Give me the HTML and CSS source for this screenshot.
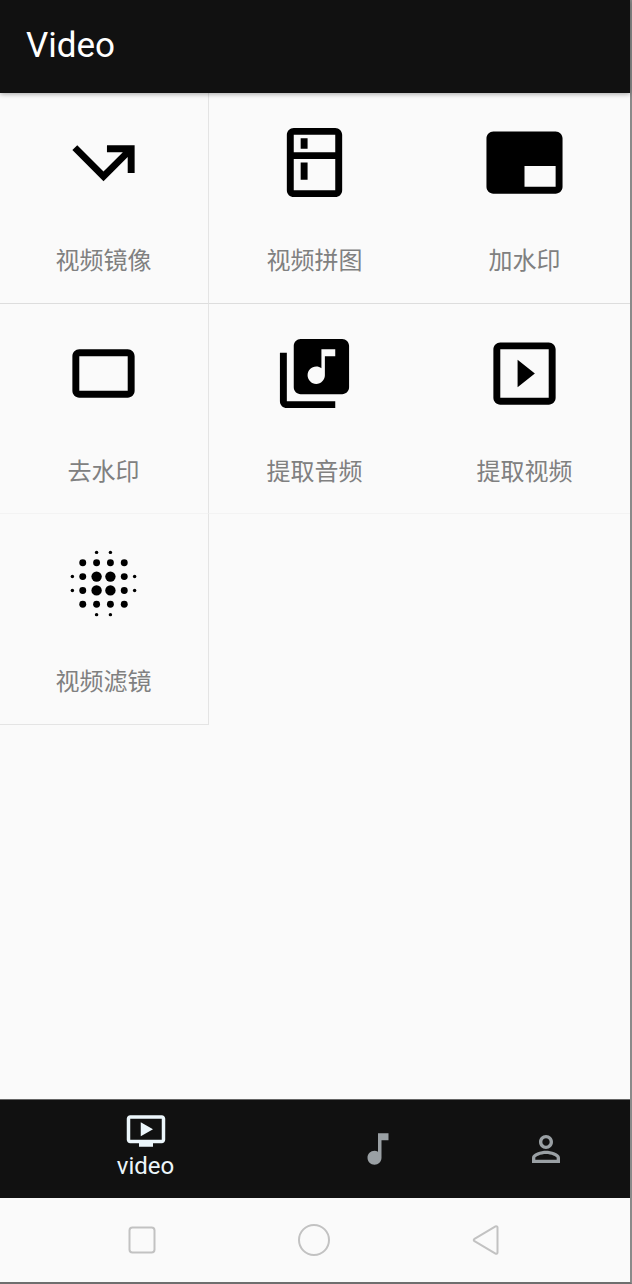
FILE: index.html
```html
<!DOCTYPE html>
<html lang="en">
<head>
    <meta charset="UTF-8">
    <meta name="viewport" content="width=device-width, initial-scale=1.0">
    <title>Video</title>
    <link rel="stylesheet" href="styles.css">
</head>
<body>
    <div class="screen">
        <header class="app-bar">Video</header>

        <main class="tools">
            <div class="tool">
                <svg class="tool-icon" viewBox="0 0 24 24"><path d="M3 8.41l9 9 7-7V15h2V7h-8v2h4.59L12 14.59 4.41 7 3 8.41z"/></svg>
                <span class="tool-label">视频镜像</span>
            </div>
            <div class="tool">
                <svg class="tool-icon" viewBox="0 0 24 24"><path d="M18 2.01L6 2c-1.1 0-2 .89-2 2v16c0 1.1.9 2 2 2h12c1.1 0 2-.9 2-2V4c0-1.11-.9-1.99-2-1.99zM18 20H6v-9.02h12V20zm0-11H6V4h12v5zM8 5h2v3H8zm0 7h2v5H8z"/></svg>
                <span class="tool-label">视频拼图</span>
            </div>
            <div class="tool">
                <svg class="tool-icon" viewBox="0 0 24 24"><path d="M21 3H3c-1.1 0-2 .9-2 2v14c0 1.1.9 2 2 2h18c1.1 0 2-.9 2-2V5c0-1.100-.9-2-2-2zm0 16h-9v-6h9v6z"/></svg>
                <span class="tool-label">加水印</span>
            </div>
            <div class="tool">
                <svg class="tool-icon" viewBox="0 0 24 24"><path d="M19 5H5c-1.1 0-2 .9-2 2v10c0 1.1.9 2 2 2h14c1.1 0 2-.9 2-2V7c0-1.100-.9-2-2-2zm0 12H5V7h14v10z"/></svg>
                <span class="tool-label">去水印</span>
            </div>
            <div class="tool">
                <svg class="tool-icon" viewBox="0 0 24 24"><path d="M20 2H8c-1.1 0-2 .9-2 2v12c0 1.1.9 2 2 2h12c1.1 0 2-.9 2-2V4c0-1.1-.9-2-2-2zm-2 5h-3v5.500c0 1.38-1.12 2.5-2.5 2.5S10 13.88 10 12.500s1.12-2.5 2.5-2.5c.57 0 1.08.19 1.5.51V5h4v2zM4 6H2v14c0 1.1.9 2 2 2h14v-2H4V6z"/></svg>
                <span class="tool-label">提取音频</span>
            </div>
            <div class="tool">
                <svg class="tool-icon" viewBox="0 0 24 24"><path d="M10 8v8l5-4-5-4zm9-5H5c-1.1 0-2 .9-2 2v14c0 1.1.9 2 2 2h14c1.1 0 2-.9 2-2V5c0-1.1-.9-2-2-2zm0 16H5V5h14v14z"/></svg>
                <span class="tool-label">提取视频</span>
            </div>
            <div class="tool">
                <svg class="tool-icon" viewBox="0 0 24 24">
                    <circle cx="10" cy="10" r="1.5"/><circle cx="14" cy="10" r="1.5"/><circle cx="10" cy="14" r="1.5"/><circle cx="14" cy="14" r="1.5"/>
                    <circle cx="6" cy="6" r="1"/><circle cx="10" cy="6" r="1"/><circle cx="14" cy="6" r="1"/><circle cx="18" cy="6" r="1"/>
                    <circle cx="6" cy="10" r="1"/><circle cx="18" cy="10" r="1"/><circle cx="6" cy="14" r="1"/><circle cx="18" cy="14" r="1"/>
                    <circle cx="6" cy="18" r="1"/><circle cx="10" cy="18" r="1"/><circle cx="14" cy="18" r="1"/><circle cx="18" cy="18" r="1"/>
                    <circle cx="10" cy="3" r=".5"/><circle cx="14" cy="3" r=".5"/><circle cx="10" cy="21" r=".5"/><circle cx="14" cy="21" r=".5"/>
                    <circle cx="3" cy="10" r=".5"/><circle cx="3" cy="14" r=".5"/><circle cx="21" cy="10" r=".5"/><circle cx="21" cy="14" r=".5"/>
                </svg>
                <span class="tool-label">视频滤镜</span>
            </div>
        </main>

        <nav class="tabs">
            <div class="tab active">
                <svg class="tab-icon" viewBox="0 0 24 24"><path d="M21 3H3c-1.11 0-2 .89-2 2v12c0 1.1.89 2 2 2h5v2h8v-2h5c1.1 0 1.99-.9 1.99-2L23 5c0-1.110-.9-2-2-2zm0 14H3V5h18v12zm-5-6l-7 4V7z"/></svg>
                <span class="tab-label">video</span>
            </div>
            <div class="tab">
                <svg class="tab-icon" viewBox="0 0 24 24"><path d="M12 3v10.55c-.59-.34-1.27-.55-2-.55-2.21 0-4 1.79-4 4s1.79 4 4 4 4-1.79 4-4V7h4V3h-6z"/></svg>
            </div>
            <div class="tab">
                <svg class="tab-icon" viewBox="0 0 24 24"><path d="M12 5.900c1.16 0 2.1.94 2.1 2.1s-.94 2.1-2.1 2.1S9.900 9.160 9.900 8s.94-2.1 2.1-2.1m0 9c2.97 0 6.100 1.46 6.100 2.1v1.100H5.900V17c0-.64 3.13-2.1 6.100-2.1M12 4C9.790 4 8 5.790 8 8s1.790 4 4 4 4-1.790 4-4-1.790-4-4-4zm0 9c-2.67 0-8 1.34-8 4v3h16v-3c0-2.660-5.330-4-8-4z"/></svg>
            </div>
        </nav>

        <div class="system-nav">
            <svg class="system-icon" viewBox="0 0 34 34"><rect x="4.500" y="4.500" width="25" height="25" rx="3"/></svg>
            <svg class="system-icon" viewBox="0 0 34 34"><circle cx="17" cy="17" r="15"/></svg>
            <svg class="system-icon" viewBox="0 0 34 34"><path d="M28 3.500c-.4-.4-1-.4-1.500-.1L5.500 15.800c-1 .6-1 1.800 0 2.400l21 12.400c.5.300 1.100.3 1.500-.1.300-.3.500-.6.500-1V4.500c0-.4-.2-.7-.5-1z"/></svg>
        </div>
    </div>
</body>
</html>
```

FILE: styles.css
```css
* {
    box-sizing: border-box;
}

html, body {
    margin: 0;
    padding: 0;
}

body {
    font-family: Roboto, "Noto Sans CJK SC", sans-serif;
    background-color: #fff;
}

.screen {
    width: 632px;
    height: 1284px;
    display: flex;
    flex-direction: column;
    background-color: #fafafa;
    border-right: 2px solid #8a8a8a;
    border-bottom: 2px solid #6e6e6e;
}

.app-bar {
    position: relative;
    flex: 0 0 93px;
    padding: 28px 0 0 26px;
    font-size: 35px;
    line-height: 36px;
    color: #fff;
    background-color: #111;
    box-shadow: 0 1px 5px rgba(0, 0, 0, 0.35);
}

.tools {
    flex: 1;
    display: grid;
    grid-template-columns: 209px 211px 1fr;
    grid-template-rows: repeat(3, 210.5px);
}

.tool {
    display: flex;
    flex-direction: column;
    align-items: center;
    padding-top: 28px;
}

.tool:nth-child(-n+3) {
    border-bottom: 1px solid #ddd;
}

.tool:nth-child(n+4):nth-child(-n+6) {
    border-bottom: 1px solid #f3f3f3;
}

.tool:nth-child(3n+1) {
    padding-right: 1px;
    border-right: 1px solid #e4e4e4;
}

.tool:nth-child(3n) {
    padding-right: 1px;
}

.tool:nth-child(7) {
    border-bottom: 1px solid #e4e4e4;
}

.tool-icon {
    width: 83px;
    height: 83px;
    fill: #000;
    flex-shrink: 0;
}

.tool-label {
    margin-top: 38px;
    font-family: "Noto Sans CJK SC", sans-serif;
    font-size: 24px;
    line-height: 34px;
    color: #808080;
}

.tabs {
    flex: 0 0 99px;
    display: grid;
    grid-template-columns: 291px 174px 161px;
    background-color: #111;
    border-top: 1px solid #666;
}

.tab {
    display: flex;
    flex-direction: column;
    align-items: center;
    justify-content: center;
    fill: #9aa0a4;
}

.tab.active {
    justify-content: flex-start;
    padding-top: 10px;
    fill: #ecf6fb;
}

.tab-icon {
    width: 42px;
    height: 42px;
}

.tab-label {
    font-size: 24px;
    line-height: 28px;
    color: #ecf6fb;
}

.system-nav {
    flex: 0 0 84px;
    display: flex;
    justify-content: center;
    align-items: center;
    gap: 138px;
    padding-right: 2px;
    background-color: #fafafa;
}

.system-icon {
    width: 34px;
    height: 34px;
    fill: none;
    stroke: #c2c2c2;
    stroke-width: 2;
}
```
